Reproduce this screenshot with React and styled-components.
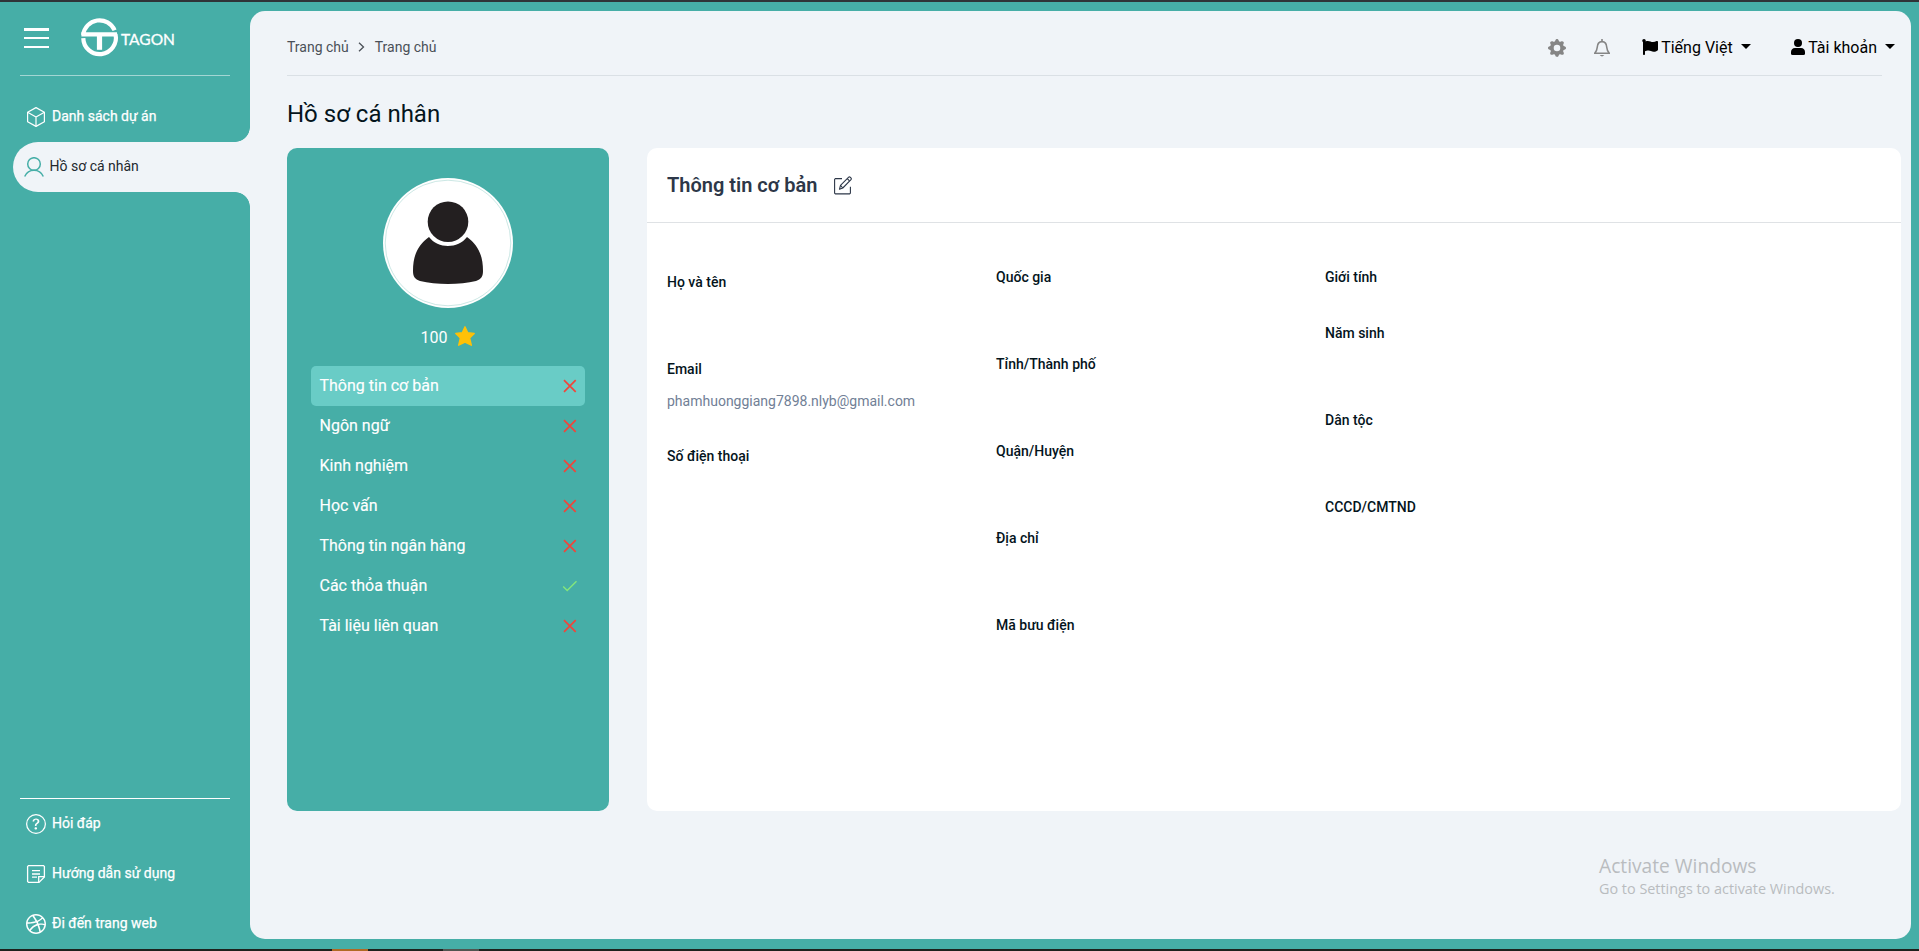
import React from 'react';
import styled, { createGlobalStyle } from 'styled-components';
import { BsGearFill, BsQuestionCircle, BsDribbble } from 'react-icons/bs';
import { FaFlag } from 'react-icons/fa';

const teal = '#46aea7';
const surface = '#f0f4f8';

const GlobalStyle = createGlobalStyle`
  * { box-sizing: border-box; }
  body { margin: 0; font-family: Roboto, "Liberation Sans", sans-serif; font-size: 16px; overflow: hidden; }
  svg { display: block; flex: none; }
`;

const Screen = styled.div`
  height: 951px;
  display: flex;
  flex-direction: column;
  background: ${teal};
`;
const TopEdge = styled.div`
  height: 2px;
  flex: none;
  background: #2f3337;
`;
const Taskbar = styled.div`
  height: 2px;
  flex: none;
  display: flex;
  padding-left: 332px;
  gap: 75px;
  background: #1d211d;
`;
const TaskMark = styled.span`
  width: 36px;
  height: 2px;
  background: ${(p) => p.$color};
`;
const Body = styled.div`
  flex: 1;
  min-height: 0;
  display: flex;
  padding-right: 8px;
`;

const Sidebar = styled.aside`
  width: 250px;
  flex: none;
  display: flex;
  flex-direction: column;
`;
const Brand = styled.div`
  height: 74px;
  margin: 0 20px;
  padding: 16px 0 0 4px;
  display: flex;
  align-items: flex-start;
  border-bottom: 1px solid #a3d6d3;
`;
const MenuButton = styled.button`
  width: 25px;
  height: 20px;
  margin: 10px 32px 0 0;
  padding: 0;
  border: 0;
  background: none;
  display: flex;
  flex-direction: column;
  justify-content: space-between;
`;
const MenuLine = styled.span`
  height: 2.5px;
  background: #fff;
`;
const NavLink = styled.a`
  height: 50px;
  flex: none;
  margin-left: ${(p) => (p.$active ? 13 : 0)}px;
  padding: 0 0 2px ${(p) => (p.$active ? 11 : 26)}px;
  display: flex;
  align-items: center;
  gap: ${(p) => (p.$active ? 5.5 : 6)}px;
  position: relative;
  color: ${(p) => (p.$active ? '#22282e' : '#fff')};
  background: ${(p) => (p.$active ? surface : 'none')};
  border-radius: 25px 0 0 25px;
  font-size: 14px;
  svg { color: ${(p) => (p.$active ? teal : '#fff')}; margin-top: 1px; }
`;
const NavText = styled.span`
  -webkit-text-stroke: ${(p) => (p.$light ? '0.25px #fff' : '0')};
`;
const Notch = styled.span`
  position: absolute;
  right: 0;
  ${(p) => p.$side}: -15px;
  width: 15px;
  height: 15px;
  background: radial-gradient(circle at 0 ${(p) => (p.$side === 'top' ? '0' : '100%')}, ${teal} 14.5px, ${surface} 15.2px);
`;
const MainNav = styled.nav`
  padding-top: 16px;
  flex: 1;
`;
const FooterNav = styled.nav`
  flex: none;
`;
const FooterRule = styled.div`
  height: 1px;
  margin: 0 20px;
  background: #fff;
`;

const Main = styled.main`
  flex: 1;
  margin: 9px 0 10px;
  padding: 0 10px 0 37px;
  border-radius: 15px;
  background: ${surface};
`;
const Header = styled.header`
  height: 65px;
  margin-right: 19px;
  border-bottom: 1px solid #dae0e5;
  display: flex;
  align-items: center;
  padding-top: 8px;
`;
const Crumbs = styled.div`
  flex: 1;
  display: flex;
  align-items: center;
  gap: 9.5px;
  font-size: 14px;
  line-height: 20px;
  color: #4a5057;
`;
const Tools = styled.div`
  display: flex;
  align-items: center;
  margin-right: -13px;
  color: #858585;
  > svg { margin-top: 2px; }
`;
const Bell = styled.span`
  margin: 2px 32px 0 28px;
`;
const Drop = styled.div`
  display: flex;
  align-items: center;
  color: #000;
  line-height: 20px;
  & + & { margin-left: 40px; }
`;
const DropLabel = styled.span`
  margin: 1px 8px 0 3.5px;
`;
const Caret = styled.span`
  border: 5px solid transparent;
  border-top-color: #000;
  border-bottom: 0;
  margin-top: -2px;
`;
const Heading = styled.h1`
  margin: 23px 0 19px;
  font-size: 24px;
  line-height: 30px;
  font-weight: 400;
  color: #04141c;
`;
const Columns = styled.div`
  display: flex;
  gap: 38px;
  height: 663px;
`;
const ProfileCard = styled.section`
  width: 322px;
  flex: none;
  border-radius: 10px;
  background: ${teal};
  padding: 30px 24px 0;
  color: #fff;
`;
const Avatar = styled.div`
  width: 130px;
  height: 130px;
  margin: 0 auto;
  border-radius: 50%;
  background: #fff;
`;
const Points = styled.div`
  display: flex;
  justify-content: center;
  align-items: center;
  gap: 8px;
  height: 58px;
  line-height: 20px;
  svg { margin-top: -2px; }
`;
const PointsValue = styled.span`
  padding-top: 1px;
`;
const Step = styled.div`
  height: 40px;
  display: flex;
  align-items: center;
  justify-content: space-between;
  padding: 0 8px 0 8.5px;
  border-radius: 5px;
  line-height: 20px;
  -webkit-text-stroke: 0.15px #fff;
  background: ${(p) => (p.$active ? '#69ccc6' : 'transparent')};
`;
const InfoCard = styled.section`
  flex: 1;
  border-radius: 10px;
  background: #fff;
`;
const InfoHeader = styled.div`
  height: 75px;
  display: flex;
  align-items: center;
  gap: 16px;
  padding: 0 20px;
  border-bottom: 1px solid #dfe2e5;
`;
const InfoTitle = styled.h2`
  margin: 0;
  font-size: 20px;
  font-weight: 600;
  color: #2d3748;
`;
const Fields = styled.div`
  display: flex;
  padding: 44px 20px;
`;
const FieldColumn = styled.div`
  width: 329px;
  padding-top: ${(p) => p.$top || 0}px;
`;
const Field = styled.div`
  height: ${(p) => p.$height || 87}px;
  font-size: 14px;
  line-height: 20px;
`;
const Label = styled.div`
  font-weight: 500;
  color: #04141c;
`;
const Value = styled.div`
  margin-top: 12px;
  color: #718096;
`;
const Watermark = styled.div`
  position: absolute;
  left: 1599px;
  top: 852px;
  font-family: "Open Sans", "Noto Sans", sans-serif;
  color: #b9bcbf;
  white-space: nowrap;
`;
const WatermarkTitle = styled.div`
  font-size: 19.2px;
  line-height: 28px;
`;
const WatermarkText = styled.div`
  font-size: 14.4px;
  line-height: 17px;
`;

const Logo = () => (
  <svg width="96" height="41" viewBox="0 -0.5 96 41" fill="none" stroke="#fff">
    <path d="M2.2 16.5A16.4 16.4 0 0 1 33.6 11.8" strokeWidth="4.2" />
    <path d="M2.3 19.6A16.3 16.3 0 1 0 34.5 15.8" strokeWidth="4.2" />
    <path d="M0.4 15.9H36" strokeWidth="4.2" />
    <path d="M18.5 16V31.3" strokeWidth="5.2" />
    <text x="40" y="26.7" fill="#fff" strokeWidth=".3" fontFamily="Lato, sans-serif" fontSize="15" textLength="54" lengthAdjust="spacingAndGlyphs">TAGON</text>
  </svg>
);
const BoxIcon = () => (
  <svg width="20" height="20" viewBox="0 0 20 20" fill="none" stroke="currentColor" strokeWidth="1.2" strokeLinejoin="round">
    <path d="M10 .6L18.4 5.2V14.8L10 19.4L1.6 14.8V5.2Z" />
    <path d="M1.6 5.2L10 10L18.4 5.2M10 10V19.4" />
  </svg>
);
const PersonIcon = () => (
  <svg width="20" height="20" viewBox="0 0 20 20" fill="none" stroke="currentColor" strokeWidth="1.5">
    <circle cx="10" cy="7" r="6.3" />
    <path d="M0.7 19.5C2.5 15.5 5.5 13.3 10 13.3S17.5 15.5 19.3 19.5" />
  </svg>
);
const NoteIcon = () => (
  <svg width="20" height="20" viewBox="0 0 20 20" fill="none" stroke="currentColor" strokeWidth="1.3">
    <path d="M2.5 1.6H17.5L18.4 2.5V13L13 18.4H2.5L1.6 17.5V2.5Z" />
    <path d="M18.4 12.7H12.7V18.4" />
    <path d="M6 6.7H14M6 10H14M6 13.2H11" />
  </svg>
);
const BellIcon = () => (
  <svg width="16" height="18" viewBox="0 0 16 18" fill="none" stroke="currentColor" strokeWidth="1.6">
    <path d="M.7 14.3H15.3C13.7 12.7 13 11 12.8 8.5C12.6 4.5 11 2.6 8 2.6S3.4 4.5 3.2 8.5C3 11 2.3 12.7.7 14.3Z" />
    <path d="M8 0V2.5" />
    <path d="M5.7 16H10.3Q8 18.8 5.7 16Z" fill="currentColor" stroke="none" />
  </svg>
);
const UserIcon = () => (
  <svg width="14" height="16" viewBox="0 0 14 16" fill="currentColor">
    <circle cx="7" cy="4" r="4" />
    <path d="M4 9H10C12.5 9 14 10.7 14 13V14.5Q14 16 12.5 16H1.5Q0 16 0 14.5V13C0 10.7 1.5 9 4 9Z" />
  </svg>
);
const PortraitIcon = () => (
  <svg width="130" height="130" viewBox="0 0 130 130" fill="#231f20">
    <circle cx="65" cy="65" r="62.8" fill="none" stroke="#b4dcd8" strokeWidth=".7" />
    <circle cx="65" cy="43.7" r="20.3" />
    <path d="M46 59C35 67 30 77 30 93C30 99 32 101 37 103C53 107 77 107 93 103C98 101 100 99 100 93C100 77 95 67 84 59C75 71 55 71 46 59Z" />
  </svg>
);
const StarIcon = () => (
  <svg width="20" height="20" viewBox="0 0 20 20" fill="#ffc107" stroke="#ffc107" strokeWidth="1.4" strokeLinejoin="round">
    <path d="M10 .8L12.7 6.7L19.2 7.4L14.6 12L16.3 19.2L10 16.2L3.7 19.2L5.4 12L.8 7.4L7.3 6.7Z" />
  </svg>
);
const EditIcon = () => (
  <svg width="18" height="19" viewBox="0 0 18 19" fill="none" stroke="#2d3748" strokeWidth="1.1" strokeLinejoin="round">
    <path d="M8 2.6H1.3L.6 3.3V17.2L1.3 17.9H15.7L16.4 17.2V10.7" />
    <path d="M5.5 13.2L6.5 9.4L14.7 1.2Q15.5.5 16.4 1.4L17 2Q17.7 2.8 17 3.7L8.8 12Z" />
    <path d="M13.3 2.6L15.5 4.9M6.5 9.4L8.8 12" />
  </svg>
);
const CheckIcon = () => (
  <svg width="15" height="12" viewBox="0 0 15 12" fill="none" stroke="#84e67c" strokeWidth="1.4">
    <path d="M1.2 6.5L5.2 10.5L14.5 1.2" />
  </svg>
);
const CrossIcon = () => (
  <svg width="14" height="14" viewBox="0 0 14 14" fill="none" stroke="#f0453a" strokeWidth="1.7">
    <path d="M1 1.2L12.7 12.9M12.7 1.2L1 12.9" />
  </svg>
);
const Chevron = () => (
  <svg width="7" height="10" viewBox="0 0 7 10" fill="none" stroke="currentColor" strokeWidth="1.3">
    <path d="M1 .8L5.5 5L1 9.2" />
  </svg>
);

const steps = [
  ['Thông tin cơ bản', false],
  ['Ngôn ngữ', false],
  ['Kinh nghiệm', false],
  ['Học vấn', false],
  ['Thông tin ngân hàng', false],
  ['Các thỏa thuận', true],
  ['Tài liệu liên quan', false],
];
const columns = [
  { top: 5, fields: [['Họ và tên'], ['Email', 'phamhuonggiang7898.nlyb@gmail.com'], ['Số điện thoại']] },
  { top: 0, fields: [['Quốc gia'], ['Tỉnh/Thành phố'], ['Quận/Huyện'], ['Địa chỉ'], ['Mã bưu điện']] },
  { top: 0, fields: [['Giới tính', '', 56], ['Năm sinh'], ['Dân tộc'], ['CCCD/CMTND']] },
];

export default function App() {
  return (
    <Screen>
      <GlobalStyle />
      <TopEdge />
      <Body>
        <Sidebar>
          <Brand>
            <MenuButton aria-label="Menu"><MenuLine /><MenuLine /><MenuLine /></MenuButton>
            <Logo />
          </Brand>
          <MainNav>
            <NavLink><BoxIcon /><NavText $light>Danh sách dự án</NavText></NavLink>
            <NavLink $active>
              <Notch $side="top" />
              <PersonIcon /><NavText>Hồ sơ cá nhân</NavText>
              <Notch $side="bottom" />
            </NavLink>
          </MainNav>
          <FooterNav>
            <FooterRule />
            <NavLink><BsQuestionCircle size={20} /><NavText $light>Hỏi đáp</NavText></NavLink>
            <NavLink><NoteIcon /><NavText $light>Hướng dẫn sử dụng</NavText></NavLink>
            <NavLink><BsDribbble size={20} /><NavText $light>Đi đến trang web</NavText></NavLink>
          </FooterNav>
        </Sidebar>
        <Main>
          <Header>
            <Crumbs><span>Trang chủ</span><Chevron /><span>Trang chủ</span></Crumbs>
            <Tools>
              <BsGearFill size={18} />
              <Bell><BellIcon /></Bell>
              <Drop><FaFlag size={16} /><DropLabel>Tiếng Việt</DropLabel><Caret /></Drop>
              <Drop><UserIcon /><DropLabel>Tài khoản</DropLabel><Caret /></Drop>
            </Tools>
          </Header>
          <Heading>Hồ sơ cá nhân</Heading>
          <Columns>
            <ProfileCard>
              <Avatar><PortraitIcon /></Avatar>
              <Points><PointsValue>100</PointsValue><StarIcon /></Points>
              {steps.map(([name, done], i) => (
                <Step key={name} $active={i === 0}>
                  {name}
                  {done ? <CheckIcon /> : <CrossIcon />}
                </Step>
              ))}
            </ProfileCard>
            <InfoCard>
              <InfoHeader><InfoTitle>Thông tin cơ bản</InfoTitle><EditIcon /></InfoHeader>
              <Fields>
                {columns.map((col, i) => (
                  <FieldColumn key={i} $top={col.top}>
                    {col.fields.map(([label, value, height]) => (
                      <Field key={label} $height={height}>
                        <Label>{label}</Label>
                        {value && <Value>{value}</Value>}
                      </Field>
                    ))}
                  </FieldColumn>
                ))}
              </Fields>
            </InfoCard>
          </Columns>
        </Main>
      </Body>
      <Taskbar><TaskMark $color="#b06a25" /><TaskMark $color="#505550" /></Taskbar>
      <Watermark>
        <WatermarkTitle>Activate Windows</WatermarkTitle>
        <WatermarkText>Go to Settings to activate Windows.</WatermarkText>
      </Watermark>
    </Screen>
  );
}
